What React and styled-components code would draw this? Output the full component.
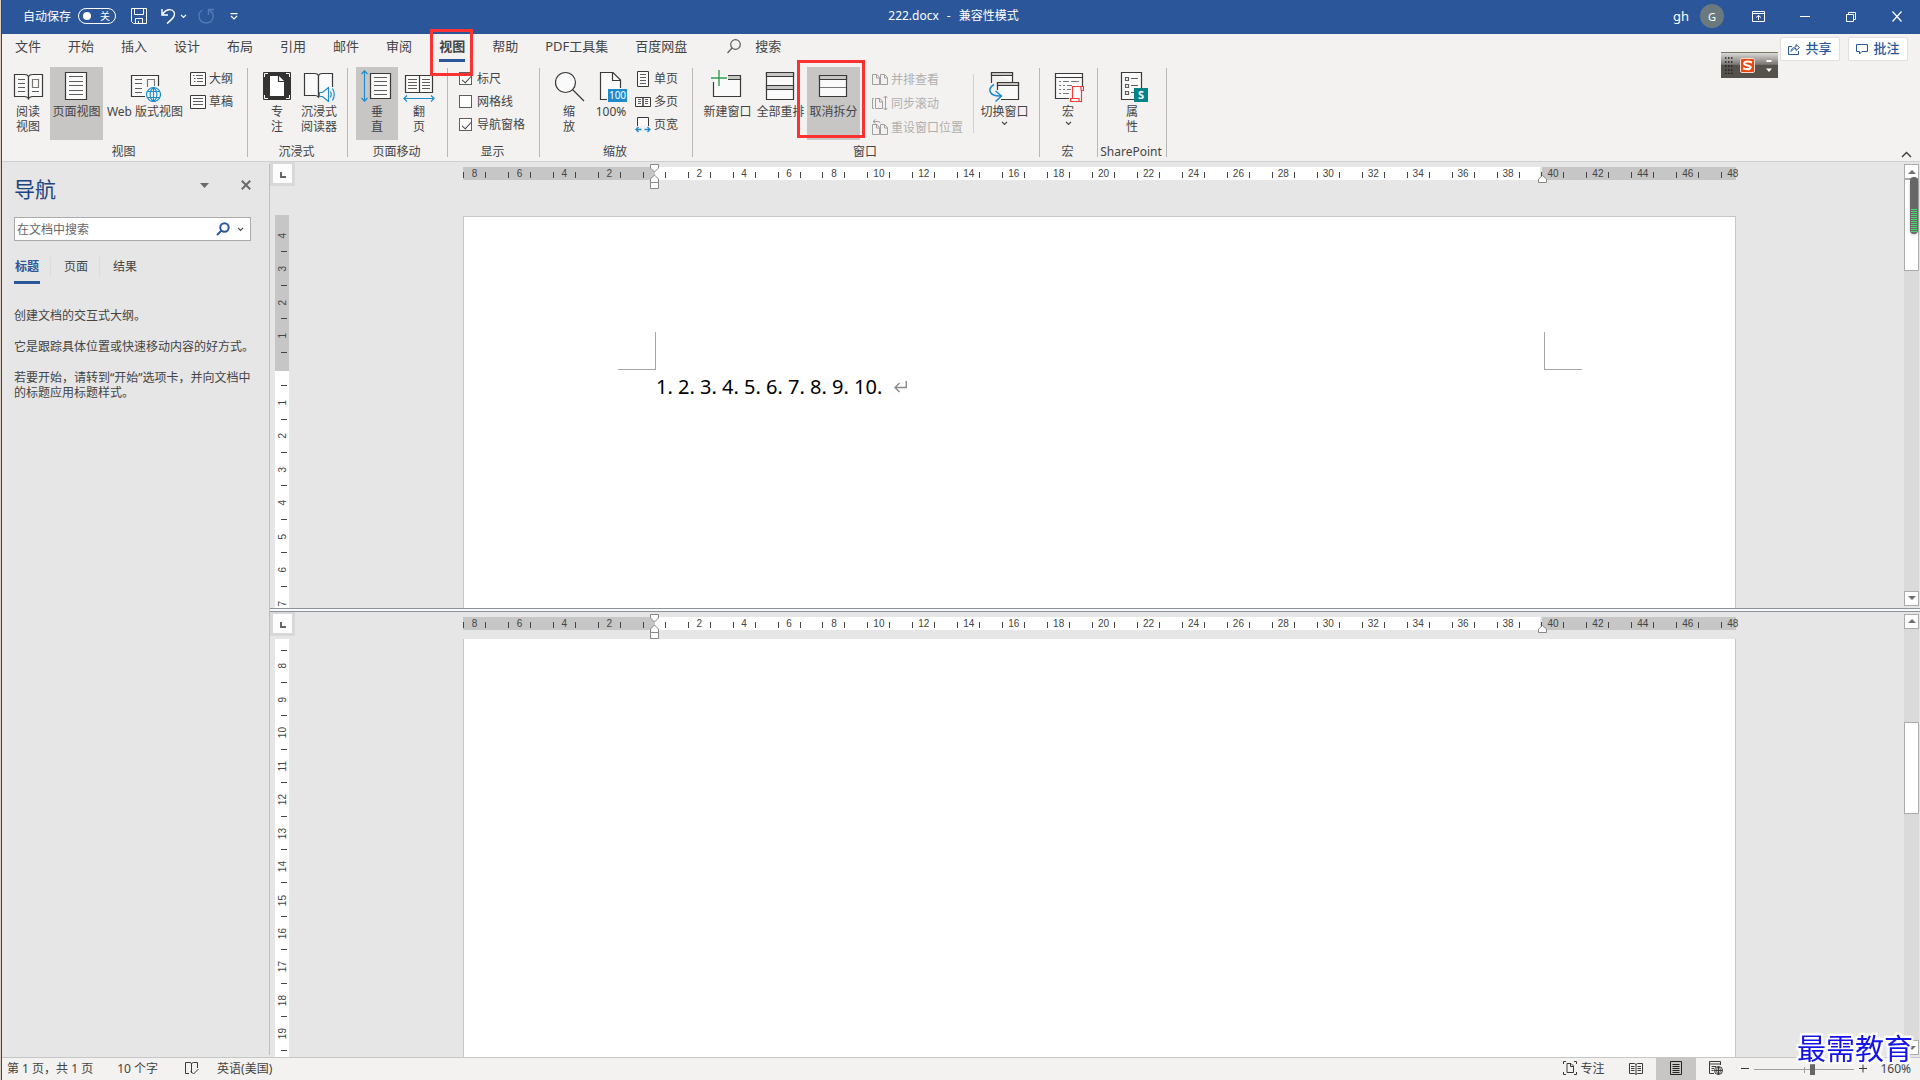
import React from "react";
import styled, { createGlobalStyle } from "styled-components";

const INK = "#444444";
const DARK = "#3b3a39";
const PAPER = "#fafafa";
const BLUE = "#2b579a";
const SKY = "#1e8bcd";
const PRESSED = "#c8c6c4";

const GlobalStyle = createGlobalStyle`
  * { box-sizing: border-box; }
  body {
    margin: 0;
    overflow: hidden;
    font-family: "Noto Sans", "Noto Sans CJK SC", sans-serif;
    font-size: 12px;
    line-height: 15px;
    color: ${INK};
  }
  button, input {
    font: inherit;
    color: inherit;
    margin: 0;
    padding: 0;
    border: 0;
    background: none;
  }
  svg { display: block; flex: none; }
`;

const Window = styled.div`
  display: flex;
  flex-direction: column;
  height: 100vh;
  padding-left: 2px;
  background: linear-gradient(to right, #dccfc5 1px, #4a423c 1px, #4a423c 2px, #e6e6e6 2px);
`;

/* ---------- title bar ---------- */
const TitleBar = styled.header`
  display: grid;
  grid-template-columns: 1fr auto 1fr;
  align-items: center;
  height: 34px;
  padding: 0 15px 0 0;
  background: ${BLUE};
  color: #fff;
`;
const QuickAccess = styled.div`
  display: flex;
  align-items: center;
  padding: 0 0 2px 21px;
`;
const Switch = styled.button`
  display: flex;
  align-items: center;
  justify-content: space-between;
  width: 38px;
  height: 16px;
  margin: 0 15px 0 7px;
  padding: 0 5px 0 4px;
  border: 1px solid #fff;
  border-radius: 8px;
  font-size: 10px;
  line-height: 14px;
  &::before {
    content: "";
    width: 8px;
    height: 8px;
    border-radius: 50%;
    background: #fff;
  }
`;
const IconButton = styled.button`
  display: flex;
  align-items: center;
  justify-content: center;
  margin-left: ${(p) => p.$gap || 0}px;
`;
const DocTitle = styled.div`
  display: flex;
  gap: 8px;
  padding-bottom: 4px;
`;
const WindowControls = styled.div`
  display: flex;
  align-items: center;
  justify-content: flex-end;
  padding: 0 3px 2px 0;
  font-size: 13px;
`;
const Avatar = styled.span`
  display: flex;
  align-items: center;
  justify-content: center;
  width: 24px;
  height: 24px;
  margin-left: 11px;
  border-radius: 50%;
  background: #69797e;
  font-size: 11px;
`;

/* ---------- ribbon ---------- */
const Ribbon = styled.section`
  position: relative;
  z-index: 1;
  background: #f3f2f1;
  border-bottom: 1px solid #d2d0ce;
`;
const TabRow = styled.nav`
  display: flex;
  align-items: flex-start;
  gap: 27px;
  height: 31px;
  padding: 0 12px 0 13px;
  font-size: 13px;
`;
const Tab = styled.button`
  position: relative;
  height: 28px;
  padding-bottom: 1px;
  border-bottom: 3px solid ${(p) => (p.$active ? BLUE : "transparent")};
  font-weight: ${(p) => (p.$active ? 700 : 400)};
  line-height: 24px;
  white-space: nowrap;
`;
const SearchTab = styled(Tab)`
  display: flex;
  align-items: center;
  gap: 14px;
  margin-left: 13px;
`;
const Callout = styled.span`
  position: absolute;
  z-index: 2;
  inset: ${(p) => p.$inset};
  border: 3px solid #fa3232;
  pointer-events: none;
`;
const TabActions = styled.div`
  display: flex;
  gap: 8px;
  margin-left: auto;
  padding-top: 3px;
`;
const ActionButton = styled.button`
  display: flex;
  align-items: center;
  justify-content: center;
  gap: 5px;
  width: 60px;
  height: 24px;
  padding-bottom: 1px;
  border: 1px solid #e1dfdd;
  border-radius: 2px;
  background: #fff;
  color: ${BLUE};
  font-weight: 500;
`;
const Groups = styled.div`
  display: flex;
  height: 96px;
`;
const Group = styled.div`
  display: flex;
  flex-direction: column;
  width: ${(p) => p.$width}px;
  padding-top: 2px;
`;
const GroupBody = styled.div`
  display: flex;
  height: 73px;
  padding-left: ${(p) => p.$pad}px;
`;
const GroupLabel = styled.div`
  padding: 4px 2px 0 0;
  text-align: center;
`;
const Separator = styled.span`
  flex: none;
  width: 1px;
  margin: 3px 0 4px;
  background: #b9b7b5;
`;
const InnerSeparator = styled.span`
  width: 1px;
  margin: 7px 4px 7px 0;
  background: #d2d0ce;
`;
const BigButton = styled.button`
  position: relative;
  display: flex;
  flex: none;
  flex-direction: column;
  align-items: center;
  gap: 2px;
  width: ${(p) => p.$width || 42}px;
  padding-top: 3px;
  background: ${(p) => (p.$pressed ? PRESSED : "transparent")};
  text-align: center;
  white-space: pre;
`;
const SmallColumn = styled.div`
  display: flex;
  flex-direction: column;
  width: ${(p) => p.$width}px;
  padding-left: ${(p) => p.$pad}px;
`;
const SmallButton = styled.button`
  display: flex;
  align-items: center;
  gap: 3px;
  height: ${(p) => p.$height || 23}px;
  white-space: nowrap;
  &:disabled { color: #b1afad; }
`;
const CheckLabel = styled.label`
  display: flex;
  align-items: center;
  gap: 5px;
  height: 23px;
  white-space: nowrap;
`;
const CheckBox = styled.input`
  appearance: none;
  position: relative;
  width: 13px;
  height: 13px;
  border: 1px solid #605e5c;
  background: #fff;
  &:checked::after {
    content: "";
    position: absolute;
    left: 4px;
    top: 1px;
    width: 4px;
    height: 8px;
    border: solid ${INK};
    border-width: 0 1px 1px 0;
    transform: rotate(42deg);
  }
`;
const Collapse = styled.button`
  position: absolute;
  right: 8px;
  bottom: 3px;
`;
const ImeBar = styled.div`
  position: absolute;
  top: 18px;
  right: 142px;
  display: flex;
  align-items: center;
  width: 57px;
  height: 26px;
  padding-left: 4px;
  border-top: 1px solid #7d766c;
  background: linear-gradient(#d8d8d6, #7c7a76 45%, #55524d 50%, #55524d);
`;
const ImeLogo = styled.svg`
  margin: 0 11px 0 7px;
`;

/* ---------- navigation pane ---------- */
const Main = styled.main`
  display: flex;
  flex: 1;
  min-height: 0;
`;
const NavPane = styled.aside`
  flex: none;
  width: 268px;
  margin: 2px 0;
  padding-left: 12px;
  border-right: 1px solid #bebebe;
`;
const NavHeader = styled.div`
  display: flex;
  align-items: center;
  height: 53px;
  padding: 0 18px 3px 0;
`;
const NavTitle = styled.h2`
  margin: 0 auto 0 0;
  color: #1c4480;
  font-size: 21px;
  font-weight: 400;
  line-height: 28px;
`;
const NavTool = styled.button`
  margin: 0 0 8px 32px;
`;
const SearchBox = styled.form`
  display: flex;
  align-items: center;
  height: 24px;
  margin-right: 18px;
  padding: 0 6px 0 2px;
  border: 1px solid #ababab;
  background: #fff;
`;
const SearchInput = styled.input`
  flex: 1;
  min-width: 0;
  outline: none;
  &::placeholder { color: #666; opacity: 1; }
`;
const NavTabs = styled.div`
  display: flex;
  height: 27px;
  margin: 16px 0 24px;
`;
const NavTab = styled.button`
  width: 26px;
  padding-bottom: 4px;
  border-bottom: 3px solid ${(p) => (p.$active ? BLUE : "transparent")};
  color: ${(p) => (p.$active ? BLUE : INK)};
  font-weight: ${(p) => (p.$active ? 700 : 400)};
  line-height: 20px;
  white-space: nowrap;
`;
const NavDivider = styled.span`
  width: 1px;
  height: 20px;
  margin: 0 12px 0 10px;
  background: #dcdcdc;
`;
const NavText = styled.p`
  margin: 0 12px 16px 0;
`;

/* ---------- document ---------- */
const Editor = styled.div`
  display: flex;
  flex: 1;
  flex-direction: column;
  min-width: 0;
`;
const Splitter = styled.div`
  flex: none;
  height: 4px;
  border: solid #8d929b;
  border-width: 1px 0;
  background: #fafafc;
`;
const Pane = styled.section`
  display: grid;
  grid-template-columns: 25px minmax(0, 1fr) 15px;
  grid-template-rows: minmax(0, 1fr);
  flex: 1 1 0;
  min-height: 0;
  padding-right: 1px;
  background: #e6e6e6;
`;
const RulerColumn = styled.div`
  display: flex;
  flex-direction: column;
  min-height: 0;
`;
const TabStop = styled.button`
  display: flex;
  flex: none;
  align-items: center;
  justify-content: center;
  width: 25px;
  height: 24px;
  padding-top: 3px;
  border: 3px solid #d8d8d8;
  border-top-width: 2px;
  background: #fcfcfc;
`;
const VRuler = styled.div`
  flex: 1;
  width: 14px;
  min-height: 0;
  margin: ${(p) => p.$top}px 0 0 5px;
  padding-top: ${(p) => p.$lead}px;
  overflow: hidden;
  background: linear-gradient(#c6c6c6 ${(p) => p.$margin}px, #fff ${(p) => p.$margin}px);
`;
const VTicks = styled.div`
  display: flex;
  flex-direction: column;
  height: 401px;
`;
const VCell = styled.span`
  display: flex;
  flex: 1;
  flex-direction: column;
  align-items: flex-end;
  justify-content: space-between;
  font-family: "Liberation Sans", Arial, sans-serif;
  font-size: 10px;
  line-height: 12px;
  &::before, &::after {
    content: "";
    width: 6px;
    height: 1px;
    margin-right: 2px;
    background: ${INK};
  }
  &::before { visibility: ${(p) => (p.$open ? "visible" : "hidden")}; }
`;
const VLabel = styled.span`
  writing-mode: vertical-rl;
  transform: rotate(180deg);
`;
const View = styled.div`
  display: flex;
  flex-direction: column;
  align-items: center;
  min-width: 0;
  min-height: 0;
`;
const Ruler = styled.div`
  position: relative;
  display: flex;
  flex: none;
  width: 1273px;
  height: 13px;
  margin: 5px 0 9px;
  background: linear-gradient(to right, #c6c6c6 192px, #fff 192px, #fff 1077px, #e6e6e6 1077px, #e6e6e6 1079px, #c6c6c6 1079px);
`;
const Ticks = styled.div`
  display: flex;
  flex: 1;
  margin: 0 -19px 0 -11px;
`;
const Cell = styled.span`
  display: flex;
  flex: 1 1 0;
  align-items: center;
  justify-content: center;
  &::before, &::after {
    content: "";
    width: 1px;
    height: 6px;
    margin-top: 3px;
    background: ${INK};
  }
  &:last-child::after { visibility: hidden; }
`;
const CellLabel = styled.span`
  width: 21px;
  text-align: center;
  font-family: "Liberation Sans", Arial, sans-serif;
  font-size: 10px;
  line-height: 13px;
`;
const Marker = styled.svg`
  position: absolute;
  left: ${(p) => p.$left}px;
  top: ${(p) => p.$top}px;
`;
const Canvas = styled.div`
  display: flex;
  flex: 1;
  min-height: 0;
  overflow: hidden;
  padding-top: ${(p) => p.$top}px;
`;
const Page = styled.article`
  width: 1273px;
  padding: ${(p) => (p.$first ? "115px 153px 0 154px" : "0")};
  border: solid #c6c6c6;
  border-width: ${(p) => (p.$first ? "1px 1px 0" : "0 1px")};
  background: #fff;
`;
const Corners = styled.div`
  display: flex;
  justify-content: space-between;
`;
const Corner = styled.span`
  width: 38px;
  height: 38px;
  border: solid #a6a6a6;
  border-width: ${(p) => (p.$right ? "0 0 1px 1px" : "0 1px 1px 0")};
`;
const BodyText = styled.p`
  display: flex;
  align-items: center;
  gap: 12px;
  margin: 0 38px;
  color: #000;
  font-family: "Noto Sans", sans-serif;
  font-size: 20px;
  line-height: 34px;
`;
const Scrollbar = styled.div`
  position: relative;
  display: flex;
  flex-direction: column;
  margin: 2px 0;
  background: #dadada;
`;
const ScrollButton = styled.button`
  display: flex;
  align-items: center;
  justify-content: center;
  height: 15px;
  border: 1px solid #ababab;
  background: #fff;
`;
const Track = styled.div`
  flex: 1;
  padding-top: ${(p) => p.$top}px;
`;
const Thumb = styled.div`
  height: 92px;
  border: 1px solid #ababab;
  background: #fff;
`;
const Meter = styled.div`
  position: absolute;
  top: 13px;
  right: 1px;
  width: 8px;
  height: 57px;
  padding: 32px 1px 1px;
  border-radius: 4px;
  background: #666;
  box-shadow: 0 1px 3px rgba(0, 0, 0, 0.2);
`;
const MeterFill = styled.div`
  height: 24px;
  background: repeating-linear-gradient(#4fd673 0 1px, #5f6f63 1px 2px);
`;

/* ---------- status bar ---------- */
const StatusBar = styled.footer`
  display: flex;
  flex: none;
  align-items: center;
  height: 23px;
  padding: 0 9px 0 5px;
  border-top: 1px solid #c6c6c6;
  background: #f3f2f1;
`;
const StatusItem = styled.button`
  display: flex;
  align-items: center;
  gap: 3px;
  margin-right: ${(p) => p.$gap || 0}px;
  padding-bottom: 2px;
  white-space: nowrap;
`;
const StatusRight = styled.div`
  display: flex;
  align-items: center;
  align-self: stretch;
  margin-left: auto;
`;
const ViewButton = styled.button`
  display: flex;
  align-items: center;
  justify-content: center;
  align-self: stretch;
  width: 40px;
  padding-bottom: 2px;
  background: ${(p) => (p.$active ? PRESSED : "transparent")};
`;
const ZoomStep = styled(IconButton)`
  padding-bottom: 2px;
`;
const SliderBox = styled.span`
  position: relative;
  display: flex;
  width: 100px;
  margin: 0 5px;
  &::before {
    content: "";
    position: absolute;
    left: 50px;
    top: 3px;
    width: 1px;
    height: 6px;
    background: #a19f9d;
  }
`;
const Slider = styled.input`
  appearance: none;
  width: 100%;
  height: 11px;
  background: linear-gradient(#a19f9d, #a19f9d) center / 100% 1px no-repeat;
  &::-webkit-slider-thumb {
    appearance: none;
    position: relative;
    width: 5px;
    height: 11px;
    background: #666;
  }
`;
const Watermark = styled.div`
  position: fixed;
  z-index: 3;
  right: 7px;
  bottom: 18px;
  color: #1414e6;
  font-family: "KaiTi", "STKaiti", "AR PL UKai CN", "Noto Sans CJK SC", sans-serif;
  font-size: 29px;
  line-height: 30px;
  text-shadow: 2px 0 1px #fff, -2px 0 1px #fff, 0 2px 1px #fff, 0 -2px 1px #fff,
    2px 2px 1px #fff, -2px -2px 1px #fff, 2px -2px 1px #fff, -2px 2px 1px #fff, 0 0 4px #fff;
`;

/* ---------- drawings ---------- */
const Svg = ({ w = 32, h = 32, stroke = DARK, fill = "none", sw = 1, children }) => (
  <svg width={w} height={h} viewBox={`0 0 ${w} ${h}`} fill={fill} stroke={stroke} strokeWidth={sw} aria-hidden="true">
    {children}
  </svg>
);
const Lines = ({ x1, x2, ys, stroke = "#605e5c" }) => (
  <path d={ys.map((y) => `M${x1} ${y}H${x2}`).join("")} stroke={stroke} strokeWidth="1" fill="none" />
);
const Chevron = ({ w = 7, stroke = INK }) => (
  <Svg w={w} h={5} stroke={stroke} sw={1.2}><path d={`M1 .8L${w / 2} 3.3L${w - 1} .8`} /></Svg>
);

const ReadIcon = () => (
  <Svg fill={PAPER} sw={1.2}>
    <path d="M2.5 4.5H12.5Q15.5 4.5 16.5 6.5V28.5Q15 26.5 12.5 26.5H2.5Z" />
    <path d="M16.5 6.5Q17.5 4.5 20.5 4.5H30.5V26.5H20.5Q18 26.5 16.5 28.5Z" />
    <Lines x1={6} x2={13} ys={[9.5, 13.5, 17.5, 21.5]} />
    <Lines x1={20} x2={27} ys={[21.5]} />
    <path d="M20.5 9.5H26.5V17.5H20.5Z" stroke="#797775" />
  </Svg>
);
const PageIcon = () => (
  <Svg w={33} fill={PAPER} sw={1.2}>
    <path d="M5.5 2.5H26.5V29.5H5.5Z" />
    <Lines x1={9} x2={23} ys={[6.5, 11.5, 15.5, 20.5, 24.5]} />
  </Svg>
);
const WebIcon = () => (
  <Svg sw={1.2}>
    <path d="M16 26.5H2.5V5.5H29.5V16" fill={PAPER} />
    <Lines x1={6} x2={13} ys={[9.5, 13.5, 18.5, 22.5]} />
    <path d="M18.5 17V9.5H25.5V16" stroke="#797775" />
    <circle cx="24.5" cy="24.5" r="7" fill={PAPER} stroke={SKY} />
    <path d="M24.5 17.5V31.5M18 21.5H31M18 27.5H31M24.5 17.5C20 21 20 28 24.5 31.5C29 28 29 21 24.5 17.5" stroke={SKY} />
  </Svg>
);
const FocusIcon = () => (
  <Svg stroke="none">
    <rect x="2" y="2" width="28" height="28" rx="1" fill="#333" />
    <path d="M9 6H18L23 11V26H9Z" fill="#fff" />
    <path d="M17.5 5.5V11.5H23.5" stroke="#333" strokeWidth="1.2" />
    <path d="M3.5 7V3.5H7M25 3.5H28.5V7M28.5 25V28.5H25M7 28.5H3.5V25" stroke="#fff" />
  </Svg>
);
const ImmersiveIcon = () => (
  <Svg sw={1.2}>
    <path d="M1.5 3.5H12Q14.5 3.5 15.5 5.5V27Q14 25.5 12 25.5H1.5Z" fill={PAPER} />
    <path d="M15.5 5.5Q16.5 3.5 19 3.5H29.5V17L22 20L15.5 25Z" fill={PAPER} stroke="none" />
    <path d="M15.5 5.5Q16.5 3.5 19 3.5H29.5V17M15.5 5.5V25" />
    <path d="M16.5 22.5H19.5L25.5 17.5V31.5L19.5 26.5H16.5Z" fill={PAPER} stroke={SKY} />
    <path d="M27.5 21.5Q29 24.5 27.5 27.5M29.5 18.5Q33 24.5 29.5 30.5" stroke={SKY} />
  </Svg>
);
const VerticalIcon = () => (
  <Svg sw={1.2}>
    <path d="M9.5 3.5H29.5V28.5H9.5Z" fill={PAPER} />
    <Lines x1={13} x2={26} ys={[7.5, 11.5, 15.5, 20.5, 24.5]} />
    <path d="M3.5 1V31M.5 4L3.5 .8L6.5 4M.5 28L3.5 31.2L6.5 28" stroke={SKY} />
  </Svg>
);
const FlipIcon = () => (
  <Svg sw={1.2}>
    <path d="M2.5 5.5H16.5V22.5H2.5ZM16.5 5.5H29.5V22.5H16.5Z" fill={PAPER} />
    <Lines x1={5} x2={14} ys={[9.5, 12.5, 15.5, 18.5]} />
    <Lines x1={19} x2={27} ys={[9.5, 12.5, 15.5, 18.5]} />
    <path d="M1 28.5H31M4 25.5L.8 28.5L4 31.5M28 25.5L31.2 28.5L28 31.5" stroke={SKY} />
  </Svg>
);
const ZoomIcon = () => (
  <Svg sw={1.2}>
    <circle cx="12.5" cy="12.5" r="10" fill={PAPER} />
    <path d="M19.5 19.5L31 31" />
  </Svg>
);
const HundredIcon = () => (
  <Svg sw={1.2}>
    <path d="M5.5 29.5V2.5H18.5L25.5 9.5V29.5Z" fill={PAPER} stroke="none" />
    <path d="M12 29.5H5.5V2.5H18L25.5 10V18M17.5 2.5V10.5H25.5" />
    <rect x="13" y="19" width="19" height="13" fill={SKY} stroke="none" />
    <text x="22.5" y="29" textAnchor="middle" fontSize="10" fill="#fff" stroke="none">100</text>
  </Svg>
);
const NewWindowIcon = () => (
  <Svg w={33} sw={1.2}>
    <path d="M2.5 5.5H29.5V26.5H2.5Z" fill={PAPER} stroke="none" />
    <path d="M17 5.5H29.5V9.5H17" fill="#c8c6c4" />
    <path d="M29.5 9V26.5H2.5V12" />
    <path d="M8 0V16M0 8H16" stroke="#2f9e4f" strokeWidth="1.4" />
  </Svg>
);
const ArrangeIcon = () => (
  <Svg w={33} sw={1.2}>
    <path d="M2.5 2.5H29.5V29.5H2.5Z" fill={PAPER} />
    <path d="M2.5 2.5H29.5V6.5H2.5ZM2.5 15.5H29.5V19.5H2.5Z" fill="#c8c6c4" />
  </Svg>
);
const SplitIcon = () => (
  <Svg w={33} sw={1.2}>
    <path d="M2.5 5.5H29.5V26.5H2.5Z" fill={PAPER} />
    <path d="M2.5 5.5H29.5V9.5H2.5Z" fill="#c8c6c4" />
    <Lines x1={3} x2={29} ys={[17.5]} stroke="#797775" />
  </Svg>
);
const SwitchIcon = () => (
  <Svg w={33} sw={1.2}>
    <path d="M3.5 2.5H24.5V12M3.5 2.5V13" fill={PAPER} />
    <path d="M3.5 2.5H24.5V5.5H3.5Z" fill="#c8c6c4" />
    <path d="M9.5 12.5H30.5V29.5H9.5Z" fill={PAPER} />
    <path d="M9.5 12.5H30.5V15.5H9.5Z" fill="#c8c6c4" />
    <path d="M13 20V31H6V20Z" fill="#f3f2f1" stroke="none" />
    <path d="M6 14.5C-1 19 1 26.5 13 26M7.5 21L13.5 26L7.5 31.5" stroke={SKY} strokeWidth="1.5" />
  </Svg>
);
const MacroIcon = () => (
  <Svg sw={1.2}>
    <path d="M3.5 3.5H30.5V28.5H3.5Z" fill={PAPER} stroke="none" />
    <path d="M30.5 16V3.5H3.5V28.5H17M3.5 7.5H30.5" />
    <path d="M7 11.5H9M7 15.5H9M7 19.5H9M7 23.5H9M11 11.5H17M19 11.5H27M11 15.5H13M15 15.5H20M11 19.5H13M15 19.5H19M11 23.5H17" stroke="#797775" />
    <path d="M20.5 16.5H31.5V20.5H29.5V31.5H18.5V28.5H20.5ZM18.5 28.5H27V31.5M29 16.5V20.5" fill={PAPER} stroke="#ee3c3c" />
  </Svg>
);
const PropertiesIcon = () => (
  <Svg sw={1.2}>
    <path d="M5.5 2.5H25.5V29.5H5.5Z" fill={PAPER} />
    <path d="M9.5 7.5H12.5V10.5H9.5ZM9.5 14.5H12.5V17.5H9.5ZM9.5 21.5H12.5V24.5H9.5ZM15 8.5H22M15 15.5H22M15 22.5H18" stroke="#605e5c" />
    <rect x="18" y="18" width="14" height="14" fill="#038387" stroke="none" />
    <text x="25" y="29" textAnchor="middle" fontSize="11" fontWeight="700" fill="#fff" stroke="none">S</text>
  </Svg>
);

const OutlineIcon = () => (
  <Svg w={16} h={16}>
    <path d="M.5 1.5H15.5V14.5H.5Z" fill={PAPER} />
    <path d="M3 4.5H4.5M6 4.5H13M4 7.5H5.5M7 7.5H13M4 10.5H5.5M7 10.5H13" stroke="#605e5c" />
  </Svg>
);
const DraftIcon = () => (
  <Svg w={16} h={16}>
    <path d="M.5 1.5H15.5V14.5H.5Z" fill={PAPER} />
    <Lines x1={3} x2={13} ys={[4.5, 7.5, 10.5]} />
  </Svg>
);
const OnePageIcon = () => (
  <Svg w={16} h={16}>
    <path d="M2.5 .5H13.5V15.5H2.5Z" fill={PAPER} />
    <Lines x1={5} x2={11} ys={[3.5, 6.5, 9.5, 12.5]} />
  </Svg>
);
const MultiPageIcon = () => (
  <Svg w={16} h={16}>
    <path d="M.5 3.5H8V12.5H.5ZM8 3.5H15.5V12.5H8Z" fill={PAPER} />
    <Lines x1={3} x2={6} ys={[5.5, 7.5, 9.5]} />
    <Lines x1={10} x2={13} ys={[5.5, 7.5, 9.5]} />
  </Svg>
);
const PageWidthIcon = () => (
  <Svg w={16} h={16}>
    <path d="M2.5 9V.5H13.5V9" fill={PAPER} />
    <path d="M1 12.5H6.5M9.5 12.5H15M3.5 10L1 12.5L3.5 15M12.5 10L15 12.5L12.5 15" stroke={SKY} strokeWidth="1.3" />
  </Svg>
);
const TwoSheets = "M.5 3.5V13.5H7.5V6.5L5 3.5H.5ZM8.5 3.5H12.5L15.5 6.5V13.5H8.5ZM4.5 3.5V7H7.5M12.5 3.5V7H15.5";
const SideBySideIcon = () => <Svg w={16} h={16} stroke="#a19f9d"><path d={TwoSheets} /></Svg>;
const SyncIcon = () => (
  <Svg w={16} h={16} stroke="#a19f9d"><path d="M2 3.5H.5V13.5H2M3.5 3.5H8L10.5 6.5V13.5H3.5ZM7.5 3.5V7H10.5M13.5 1V15M11.5 3L13.5 1L15.5 3M11.5 13L13.5 15L15.5 13" /></Svg>
);
const ResetIcon = () => (
  <Svg w={16} h={16} stroke="#a19f9d"><g transform="translate(0 2)"><path d={TwoSheets} /></g><path d="M3.5 .5L1 2.5L3.5 4.5M1 2.5H6Q8 2.5 8 4" /></Svg>
);
const TriDown = () => <svg width="9" height="5" viewBox="0 0 9 5"><path d="M0 0H9L4.5 5Z" fill="#6a6a6a" /></svg>;
const ScrollArrow = ({ down }) => (
  <svg width="8" height="4" viewBox="0 0 8 4"><path d={down ? "M0 0H8L4 4Z" : "M0 4H8L4 0Z"} fill="#6f6f6f" /></svg>
);

/* ---------- data ---------- */
const TABS = ["文件", "开始", "插入", "设计", "布局", "引用", "邮件", "审阅", "视图", "帮助", "PDF工具集", "百度网盘"];
const H_LABELS = [8, 6, 4, 2, "", ...Array.from({ length: 24 }, (_, i) => (i + 1) * 2)];
const V_TOP = [4, 3, 2, 1, "", 1, 2, 3, 4, 5, 6, 7];
const V_BOTTOM = Array.from({ length: 12 }, (_, i) => i + 8);

function RibbonGroup({ label, width, pad, children }) {
  return (
    <>
      <Group $width={width}>
        <GroupBody $pad={pad}>{children}</GroupBody>
        <GroupLabel>{label}</GroupLabel>
      </Group>
      <Separator />
    </>
  );
}

function Big({ icon, label, width, pressed, menu, children }) {
  return (
    <BigButton type="button" $width={width} $pressed={pressed}>
      {icon}
      <span>{label}</span>
      {menu && <Chevron />}
      {children}
    </BigButton>
  );
}

function HorizontalRuler() {
  return (
    <Ruler>
      <Ticks>
        {H_LABELS.map((n, i) => (
          <Cell key={i}><CellLabel>{n}</CellLabel></Cell>
        ))}
      </Ticks>
      <Marker $left={187} $top={-3} width="9" height="25" viewBox="0 0 9 25" fill="#fff" stroke="#8a8886">
        <path d="M.5 .5H8.5V4L4.5 8L.5 4ZM.5 18.5V15L4.5 11L8.5 15V18.5ZM.5 18.5H8.5V24.5H.5Z" />
      </Marker>
      <Marker $left={1075} $top={8} width="9" height="8" viewBox="0 0 9 8" fill="#fff" stroke="#8a8886">
        <path d="M.5 7.5V4L4.5 .5L8.5 4V7.5Z" />
      </Marker>
    </Ruler>
  );
}

function DocPane({ labels, rulerTop, rulerLead, rulerMargin, openTick, canvasTop, thumbTop, first, meter, children }) {
  return (
    <Pane>
      <RulerColumn>
        <TabStop type="button" aria-label="制表符">
          <Svg w={6} h={6} stroke="#666" sw={2}><path d="M1 0V5H6" /></Svg>
        </TabStop>
        <VRuler $top={rulerTop} $lead={rulerLead} $margin={rulerMargin}>
          <VTicks>
            {labels.map((n, i) => (
              <VCell key={i} $open={openTick && i === 0}><VLabel>{n}</VLabel></VCell>
            ))}
          </VTicks>
        </VRuler>
      </RulerColumn>
      <View>
        <HorizontalRuler />
        <Canvas $top={canvasTop}><Page $first={first}>{children}</Page></Canvas>
      </View>
      <Scrollbar>
        <ScrollButton type="button" aria-label="向上"><ScrollArrow /></ScrollButton>
        <Track $top={thumbTop}><Thumb /></Track>
        <ScrollButton type="button" aria-label="向下"><ScrollArrow down /></ScrollButton>
        {meter && <Meter><MeterFill /></Meter>}
      </Scrollbar>
    </Pane>
  );
}

export default function App() {
  return (
    <Window>
      <GlobalStyle />
      <TitleBar>
        <QuickAccess>
          <span>自动保存</span>
          <Switch type="button" role="switch" aria-checked="false" aria-label="自动保存">关</Switch>
          <IconButton type="button" aria-label="保存">
            <Svg w={16} h={16} stroke="#fff"><path d="M.5 .5H15.5V15.5H2.5L.5 13.5ZM3.5 .5V6.5H12.5V.5M4.5 15.5V10.5H11.5V15.5M7.5 13V15.5" /></Svg>
          </IconButton>
          <IconButton type="button" aria-label="撤消" $gap={14}>
            <Svg w={15} h={16} stroke="#fff" sw={1.4}><path d="M1 1V7H7M1.5 6.5C5 .5 11 .5 13 4C15 8.5 10 12 6 15.5" /></Svg>
          </IconButton>
          <IconButton type="button" aria-label="撤消选项" $gap={4}><Chevron stroke="#fff" /></IconButton>
          <IconButton type="button" aria-label="重复" $gap={11}>
            <Svg w={16} h={16} stroke="#5479b3" sw={1.4}><path d="M4.5 2C-1 5 0 14.5 8 15C16 15 17.5 5 11 2M10.5 7V1.5H16" /></Svg>
          </IconButton>
          <IconButton type="button" aria-label="自定义快速访问工具栏" $gap={16}>
            <Svg w={8} h={7} stroke="#fff" sw={1.2}><path d="M.5 .6H7.5M1 3L4 6L7 3" /></Svg>
          </IconButton>
        </QuickAccess>
        <DocTitle><span>222.docx</span><span>-</span><span>兼容性模式</span></DocTitle>
        <WindowControls>
          <span>gh</span>
          <Avatar>G</Avatar>
          <IconButton type="button" aria-label="功能区显示选项" $gap={28}>
            <Svg w={13} h={11} stroke="#fff"><path d="M.5 .5H12.5V10.5H.5ZM.5 2.5H12.5M6.5 9V4.5M4 6.5L6.5 4.5L9 6.5" /></Svg>
          </IconButton>
          <IconButton type="button" aria-label="最小化" $gap={35}>
            <Svg w={10} h={11} stroke="#fff"><path d="M0 5.5H10" /></Svg>
          </IconButton>
          <IconButton type="button" aria-label="还原" $gap={36}>
            <Svg w={10} h={11} stroke="#fff"><path d="M.5 3.5H7.5V10.5H.5ZM2.5 3.5V1.5H9.5V8.5H7.5" /></Svg>
          </IconButton>
          <IconButton type="button" aria-label="关闭" $gap={36}>
            <Svg w={10} h={11} stroke="#fff" sw={1.2}><path d="M.5 .5L9.5 10.5M9.5 .5L.5 10.5" /></Svg>
          </IconButton>
        </WindowControls>
      </TitleBar>

      <Ribbon>
        <TabRow>
          {TABS.map((t) => (
            <Tab key={t} type="button" $active={t === "视图"}>
              {t}
              {t === "视图" && <Callout $inset="-5px -8px -17px -9px" />}
            </Tab>
          ))}
          <SearchTab type="button">
            <Svg w={14} h={15} stroke="#605e5c" sw={1.2}><circle cx="8.5" cy="5.5" r="4.8" /><path d="M5 9L.5 14" /></Svg>
            搜索
          </SearchTab>
          <TabActions>
            <ActionButton type="button">
              <Svg w={12} h={12} stroke={BLUE}><path d="M4 3.5H.5V11.5H10.5V8M3 8.5C3.5 5 6 4 8 4V1.5L11.5 4.5L8 7.5V5.5C6 5.5 4.5 6.5 3 8.5Z" /></Svg>
              共享
            </ActionButton>
            <ActionButton type="button">
              <Svg w={12} h={12} stroke={BLUE}><path d="M.5 1.5H11.5V8.5H6L3.5 11V8.5H.5Z" /></Svg>
              批注
            </ActionButton>
          </TabActions>
        </TabRow>

        <Groups>
          <RibbonGroup label="视图" width={245} pad={4}>
            <Big icon={<ReadIcon />} label={"阅读\n视图"} width={44} />
            <Big icon={<PageIcon />} label="页面视图" width={53} pressed />
            <Big icon={<WebIcon />} label="Web 版式视图" width={84} />
            <SmallColumn $width={56} $pad={3}>
              <SmallButton type="button"><OutlineIcon />大纲</SmallButton>
              <SmallButton type="button"><DraftIcon />草稿</SmallButton>
            </SmallColumn>
          </RibbonGroup>
          <RibbonGroup label="沉浸式" width={99} pad={8}>
            <Big icon={<FocusIcon />} label={"专\n注"} />
            <Big icon={<ImmersiveIcon />} label={"沉浸式\n阅读器"} />
          </RibbonGroup>
          <RibbonGroup label="页面移动" width={99} pad={8}>
            <Big icon={<VerticalIcon />} label={"垂\n直"} pressed />
            <Big icon={<FlipIcon />} label={"翻\n页"} />
          </RibbonGroup>
          <RibbonGroup label="显示" width={91} pad={11}>
            <SmallColumn>
              <CheckLabel><CheckBox type="checkbox" defaultChecked />标尺</CheckLabel>
              <CheckLabel><CheckBox type="checkbox" />网格线</CheckLabel>
              <CheckLabel><CheckBox type="checkbox" defaultChecked />导航窗格</CheckLabel>
            </SmallColumn>
          </RibbonGroup>
          <RibbonGroup label="缩放" width={152} pad={8}>
            <Big icon={<ZoomIcon />} label={"缩\n放"} />
            <Big icon={<HundredIcon />} label="100%" />
            <SmallColumn $width={52} $pad={3}>
              <SmallButton type="button"><OnePageIcon />单页</SmallButton>
              <SmallButton type="button"><MultiPageIcon />多页</SmallButton>
              <SmallButton type="button"><PageWidthIcon />页宽</SmallButton>
            </SmallColumn>
          </RibbonGroup>
          <RibbonGroup label="窗口" width={346} pad={8}>
            <Big icon={<NewWindowIcon />} label="新建窗口" width={53} />
            <Big icon={<ArrangeIcon />} label="全部重排" width={53} />
            <Big icon={<SplitIcon />} label="取消拆分" width={53} pressed>
              <Callout $inset="-7px -5px 2px -10px" />
            </Big>
            <SmallColumn $width={113} $pad={12}>
              <SmallButton type="button" $height={24} disabled><SideBySideIcon />并排查看</SmallButton>
              <SmallButton type="button" $height={24} disabled><SyncIcon />同步滚动</SmallButton>
              <SmallButton type="button" $height={24} disabled><ResetIcon />重设窗口位置</SmallButton>
            </SmallColumn>
            <InnerSeparator />
            <Big icon={<SwitchIcon />} label="切换窗口" width={53} menu />
          </RibbonGroup>
          <RibbonGroup label="宏" width={57} pad={7}>
            <Big icon={<MacroIcon />} label="宏" menu />
          </RibbonGroup>
          <RibbonGroup label="SharePoint" width={68} pad={13}>
            <Big icon={<PropertiesIcon />} label={"属\n性"} />
          </RibbonGroup>
        </Groups>
        <Collapse type="button" aria-label="折叠功能区">
          <Svg w={11} h={7} sw={1.4}><path d="M1 6L5.5 1.5L10 6" /></Svg>
        </Collapse>
        <ImeBar>
          <Svg w={8} h={17} stroke="#222" sw={1.5}><path d="M0 1H8M0 5H8M0 9H8M0 13H8M0 16.5H8" strokeDasharray="1.5 1.5" /></Svg>
          <ImeLogo width="15" height="15" viewBox="0 0 15 15">
            <rect x=".5" y=".5" width="14" height="14" rx="1.5" fill="#e8470e" stroke="#f6d9cc" />
            <path d="M12 4.5Q7 2.5 4.5 4.5Q3 6.5 7.5 7.5Q12 8.5 10 10.5Q7.5 12 3 10.2" fill="none" stroke="#fff" strokeWidth="2.2" />
          </ImeLogo>
          <svg width="6" height="13" viewBox="0 0 6 13"><path d="M.5 1H5.5V3H.5ZM0 9.5H6L3 13Z" fill="#fff" /></svg>
        </ImeBar>
      </Ribbon>

      <Main>
        <NavPane>
          <NavHeader>
            <NavTitle>导航</NavTitle>
            <NavTool type="button" aria-label="任务窗格选项"><TriDown /></NavTool>
            <NavTool type="button" aria-label="关闭导航">
              <Svg w={10} h={10} stroke="#6a6a6a" sw={2}><path d="M.8 .8L9.2 9.2M9.2 .8L.8 9.2" /></Svg>
            </NavTool>
          </NavHeader>
          <SearchBox>
            <SearchInput aria-label="在文档中搜索" placeholder="在文档中搜索" />
            <IconButton type="button" aria-label="搜索">
              <Svg w={14} h={14} stroke={BLUE} sw={2}><circle cx="8.5" cy="5.5" r="4.2" /><path d="M5.5 8.5L1 13" /></Svg>
            </IconButton>
            <IconButton type="button" aria-label="搜索选项" $gap={7}><Chevron w={7} /></IconButton>
          </SearchBox>
          <NavTabs>
            <NavTab type="button" $active>标题</NavTab>
            <NavDivider />
            <NavTab type="button">页面</NavTab>
            <NavDivider />
            <NavTab type="button">结果</NavTab>
          </NavTabs>
          <NavText>创建文档的交互式大纲。</NavText>
          <NavText>它是跟踪具体位置或快速移动内容的好方式。</NavText>
          <NavText>若要开始，请转到“开始”选项卡，并向文档中的标题应用标题样式。</NavText>
        </NavPane>

        <Editor>
          <DocPane labels={V_TOP} rulerTop={29} rulerLead={4} rulerMargin={156} canvasTop={27} thumbTop={0} first meter>
            <Corners><Corner /><Corner $right /></Corners>
            <BodyText>
              1. 2. 3. 4. 5. 6. 7. 8. 9. 10.
              <Svg w={13} h={12} stroke="#8a8a8a" sw={1.4}><path d="M12.3 0V6.5H1M5.5 2L1 6.5L5.5 11" /></Svg>
            </BodyText>
          </DocPane>
          <Splitter />
          <DocPane labels={V_BOTTOM} rulerTop={3} rulerLead={11} rulerMargin={0} openTick canvasTop={0} thumbTop={93} />
        </Editor>
      </Main>

      <StatusBar>
        <StatusItem type="button" $gap={24}>第 1 页，共 1 页</StatusItem>
        <StatusItem type="button" $gap={27}>10 个字</StatusItem>
        <StatusItem type="button" aria-label="校对" $gap={18}>
          <Svg w={14} h={14}><path d="M4 12.5H.5V1.5H5Q6.5 1.5 6.5 3V12M6.5 3Q7 1.5 8.5 1.5H12.5V7M5.5 10L8.5 13L13.5 8" /></Svg>
        </StatusItem>
        <StatusItem type="button">英语(美国)</StatusItem>
        <StatusRight>
          <StatusItem type="button" $gap={12}>
            <Svg w={14} h={14}><path d="M3 .5H.5V3M11 .5H13.5V3M13.5 11V13.5H11M3 13.5H.5V11M4 2.5H8L10.5 5V11.5H4ZM7.5 2.5V5.5H10.5" /></Svg>
            专注
          </StatusItem>
          <ViewButton type="button" aria-label="阅读视图">
            <Svg w={14} h={13}><path d="M.5 1.5H5.5L7 2.5L8.5 1.5H13.5V11.5H8.5L7 12.5L5.5 11.5H.5ZM7 2.5V12M2 4.5H5.5M2 6.5H5.5M2 8.5H5.5M8.5 4.5H12M8.5 6.5H12M8.5 8.5H12" /></Svg>
          </ViewButton>
          <ViewButton type="button" aria-label="页面视图" $active>
            <Svg w={12} h={14} stroke="#222"><path d="M.5 .5H11.5V13.5H.5ZM2.5 3.5H9.5M2.5 5.5H9.5M2.5 7.5H9.5M2.5 9.5H9.5M2.5 11.5H9.5" /></Svg>
          </ViewButton>
          <ViewButton type="button" aria-label="Web 版式视图">
            <Svg w={14} h={14}>
              <path d="M5 12.5H.5V.5H11.5V4M.5 3H11.5M2.5 5.5H7M2.5 7.5H5M2.5 9.5H4.5" />
              <circle cx="9.5" cy="9.5" r="4" /><path d="M9.5 5.5V13.5M5.5 9.5H13.5M9.5 5.5C7 8 7 11 9.5 13.5C12 11 12 8 9.5 5.5" />
            </Svg>
          </ViewButton>
          <ZoomStep type="button" aria-label="缩小" $gap={5}><Svg w={8} h={9}><path d="M0 4.5H8" /></Svg></ZoomStep>
          <SliderBox><Slider type="range" min="0" max="100" defaultValue="58" aria-label="缩放" /></SliderBox>
          <StatusItem type="button" aria-label="放大" $gap={13}><Svg w={8} h={9}><path d="M0 4.5H8M4 .5V8.5" /></Svg></StatusItem>
          <StatusItem type="button">160%</StatusItem>
        </StatusRight>
      </StatusBar>
      <Watermark>最需教育</Watermark>
    </Window>
  );
}
